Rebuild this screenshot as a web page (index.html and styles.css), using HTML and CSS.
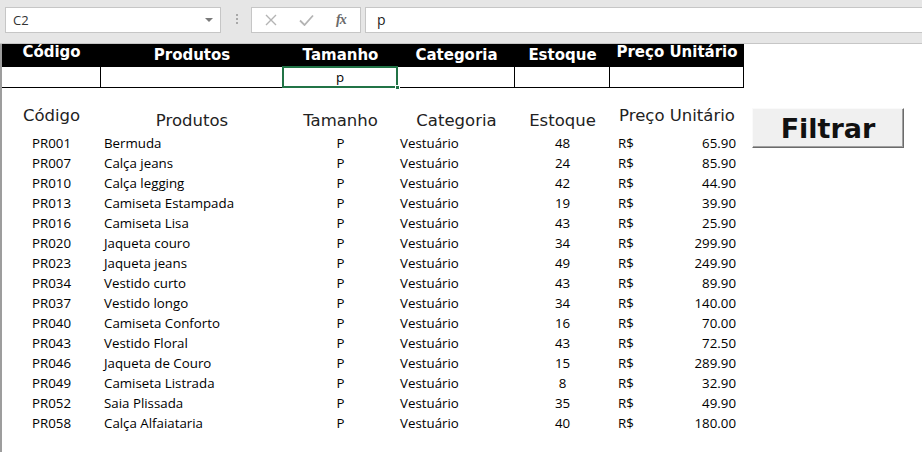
FILE: index.html
```html
<!DOCTYPE html>
<html lang="pt-BR">
<head>
    <meta charset="UTF-8">
    <title>Filtro de Produtos</title>
    <link rel="stylesheet" href="styles.css">
</head>
<body>
    <!-- Formula bar -->
    <div class="toolbar">
        <div class="name-box">
            <span>C2</span>
            <span class="caret"></span>
        </div>
        <div class="grip"><i></i><i></i><i></i></div>
        <div class="fx-buttons">
            <svg class="icon" width="12" height="12" viewBox="0 0 12 12">
                <path d="M1 1 L11 11 M11 1 L1 11" stroke="#b4b4b4" stroke-width="1.4" fill="none"/>
            </svg>
            <svg class="icon" width="15" height="12" viewBox="0 0 15 12">
                <path d="M1 6.5 L5.5 11 L14 1.5" stroke="#b4b4b4" stroke-width="1.8" fill="none"/>
            </svg>
            <span class="fx">fx</span>
        </div>
        <div class="formula">p</div>
    </div>

    <div class="sheet">
        <!-- Filter criteria -->
        <div class="grid filter">
            <div class="th up">Código</div>
            <div class="th">Produtos</div>
            <div class="th">Tamanho</div>
            <div class="th">Categoria</div>
            <div class="th">Estoque</div>
            <div class="th up">Preço Unitário</div>

            <div class="td"></div>
            <div class="td"></div>
            <div class="td selected">p<span class="handle"></span></div>
            <div class="td"></div>
            <div class="td"></div>
            <div class="td"></div>
        </div>

        <div class="results">
            <div class="grid list" id="list">
                <div class="lh up">Código</div>
                <div class="lh">Produtos</div>
                <div class="lh">Tamanho</div>
                <div class="lh">Categoria</div>
                <div class="lh">Estoque</div>
                <div class="lh up">Preço Unitário</div>
            </div>
            <button class="filter-btn">Filtrar</button>
        </div>
    </div>

    <script>
        const produtos = [
            ['PR001', 'Bermuda', 48, '65.90'],
            ['PR007', 'Calça jeans', 24, '85.90'],
            ['PR010', 'Calça legging', 42, '44.90'],
            ['PR013', 'Camiseta Estampada', 19, '39.90'],
            ['PR016', 'Camiseta Lisa', 43, '25.90'],
            ['PR020', 'Jaqueta couro', 34, '299.90'],
            ['PR023', 'Jaqueta jeans', 49, '249.90'],
            ['PR034', 'Vestido curto', 43, '89.90'],
            ['PR037', 'Vestido longo', 34, '140.00'],
            ['PR040', 'Camiseta Conforto', 16, '70.00'],
            ['PR043', 'Vestido Floral', 43, '72.50'],
            ['PR046', 'Jaqueta de Couro', 15, '289.90'],
            ['PR049', 'Camiseta Listrada', 8, '32.90'],
            ['PR052', 'Saia Plissada', 35, '49.90'],
            ['PR058', 'Calça Alfaiataria', 40, '180.00']
        ];

        const list = document.getElementById('list');
        list.insertAdjacentHTML('beforeend', produtos.map(p => `
            <div class="cell code">${p[0]}</div>
            <div class="cell name">${p[1]}</div>
            <div class="cell size">P</div>
            <div class="cell cat">Vestuário</div>
            <div class="cell stock">${p[2]}</div>
            <div class="cell price"><span>R$</span><span>${p[3]}</span></div>`
        ).join(''));
    </script>
</body>
</html>
```

FILE: styles.css
```css
* {
    margin: 0;
    padding: 0;
    box-sizing: border-box;
}

body {
    background: #fff;
    color: #000;
    font-family: "Open Sans", sans-serif;
    width: 922px;
    height: 452px;
    overflow: hidden;
}

/* Formula bar */
.toolbar {
    display: flex;
    align-items: flex-start;
    height: 44px;
    padding: 7px 0 0 5px;
    background: #e6e6e6;
    border-bottom: 1px solid #c6c6c6;
}

.name-box {
    display: flex;
    align-items: center;
    justify-content: space-between;
    width: 216px;
    height: 26px;
    padding: 0 7px 0 7px;
    background: #fff;
    border: 1px solid #c6c6c6;
    font-size: 13px;
    color: #333;
}

.caret {
    width: 0;
    height: 0;
    border-left: 4px solid transparent;
    border-right: 4px solid transparent;
    border-top: 4px solid #7a7a7a;
}

.grip {
    display: flex;
    flex-direction: column;
    gap: 2px;
    margin: 7px 13px 0 15px;
}

.grip i {
    width: 2px;
    height: 2px;
    background: #a8a8a8;
}

.fx-buttons {
    display: flex;
    align-items: center;
    width: 110px;
    height: 26px;
    padding-left: 13px;
    background: #fff;
    border: 1px solid #c6c6c6;
}

.fx-buttons .icon {
    display: block;
}

.fx-buttons .icon + .icon {
    margin-left: 22px;
}

.fx {
    margin-left: 22px;
    font-family: "Liberation Serif", serif;
    font-style: italic;
    font-weight: bold;
    font-size: 14px;
    color: #6a6a6a;
    letter-spacing: -1px;
}

.formula {
    flex: 1;
    height: 26px;
    margin-left: 4px;
    margin-right: -2px;
    padding-left: 11px;
    line-height: 23px;
    background: #fff;
    border: 1px solid #c6c6c6;
    font-size: 14px;
    color: #222;
}

/* Sheet */
.sheet {
    height: 408px;
    border-left: 2px solid #9d9d9d;
}

.grid {
    display: grid;
    grid-template-columns: 99px 182px 115px 117px 95px 134px;
    width: 742px;
}

.filter .th {
    height: 23px;
    line-height: 23px;
    background: #000;
    color: #fff;
    text-align: center;
    font-family: "DejaVu Sans", sans-serif;
    font-weight: bold;
    font-size: 15px;
}

.filter .th.up {
    line-height: 17px;
}

.filter .td {
    height: 21px;
    line-height: 20px;
    text-align: center;
    font-size: 13.3px;
    border-right: 1px solid #000;
    border-bottom: 1px solid #000;
}

.filter .selected {
    position: relative;
}

.filter .selected::after {
    content: "";
    position: absolute;
    top: -1px;
    left: -1px;
    right: -1px;
    bottom: -1px;
    border: 2px solid #217346;
}

.handle {
    position: absolute;
    right: -3px;
    bottom: -3px;
    width: 5px;
    height: 5px;
    background: #217346;
    border: 1px solid #fff;
    z-index: 1;
}

/* Results */
.results {
    display: flex;
    align-items: flex-start;
    margin-top: 16px;
}

.list .lh {
    height: 29px;
    padding-top: 7px;
    line-height: 20px;
    text-align: center;
    font-family: "DejaVu Sans", sans-serif;
    font-size: 16.5px;
    color: #222;
}

.list .lh.up {
    padding-top: 2px;
}

.cell {
    height: 20px;
    line-height: 20px;
    font-size: 13.3px;
    white-space: nowrap;
}

.code,
.size,
.stock {
    text-align: center;
}

.name {
    padding-left: 3px;
}

.cat {
    padding-left: 2px;
}

.price {
    display: flex;
    justify-content: space-between;
    padding: 0 8px 0 8px;
}

.filter-btn {
    width: 152px;
    height: 40px;
    margin: 4px 0 0 8px;
    background: #f0f0f0;
    border: 1px solid;
    border-color: #fafafa #6b6b6b #6b6b6b #fafafa;
    box-shadow: inset -1px -1px 0 #a0a0a0;
    font-family: "DejaVu Sans", sans-serif;
    font-weight: bold;
    font-size: 27px;
    color: #111;
    cursor: pointer;
}
```
